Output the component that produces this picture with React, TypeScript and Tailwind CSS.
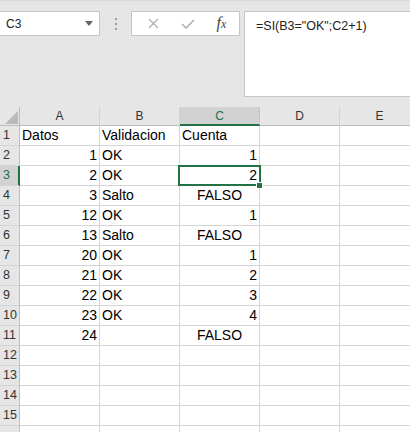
import React from "react";

type Cell = { v: string; align: "l" | "r" | "c" };

const L = (v: string): Cell => ({ v, align: "l" });
const R = (v: string): Cell => ({ v, align: "r" });
const C = (v: string): Cell => ({ v, align: "c" });
const E: Cell = { v: "", align: "l" };

const rows: Cell[][] = [
  [L("Datos"), L("Validacion"), L("Cuenta"), E, E],
  [R("1"), L("OK"), R("1"), E, E],
  [R("2"), L("OK"), R("2"), E, E],
  [R("3"), L("Salto"), C("FALSO"), E, E],
  [R("12"), L("OK"), R("1"), E, E],
  [R("13"), L("Salto"), C("FALSO"), E, E],
  [R("20"), L("OK"), R("1"), E, E],
  [R("21"), L("OK"), R("2"), E, E],
  [R("22"), L("OK"), R("3"), E, E],
  [R("23"), L("OK"), R("4"), E, E],
  [R("24"), E, C("FALSO"), E, E],
  [E, E, E, E, E],
  [E, E, E, E, E],
  [E, E, E, E, E],
  [E, E, E, E, E],
  [E, E, E, E, E],
];

const cols = ["A", "B", "C", "D", "E"];

export default function App() {
  return (
    <div
      className="w-[410px] h-[432px] overflow-hidden bg-white"
      style={{ fontFamily: '"Liberation Sans", Arial, sans-serif' }}
    >
      {/* Formula bar area */}
      <div className="h-[107px] bg-[#e6e6e6] border-t border-[#d9d9d9] pt-[10px] flex items-start">
        <div className="w-[100px] h-[25px] bg-white border border-l-0 border-[#c6c6c6] flex items-center pl-[6px] pr-[6px] text-[12px] text-[#222]">
          <span className="flex-1">C3</span>
          <svg width="8" height="5" viewBox="0 0 8 5">
            <path d="M0 0 L8 0 L4 5 Z" fill="#666" />
          </svg>
        </div>
        <div className="w-[31px] h-[25px] flex flex-col items-center justify-center gap-[3px]">
          <div className="w-[2px] h-[2px] bg-[#9a9a9a]" />
          <div className="w-[2px] h-[2px] bg-[#9a9a9a]" />
          <div className="w-[2px] h-[2px] bg-[#9a9a9a]" />
        </div>
        <div className="w-[109px] h-[25px] bg-white border border-[#c6c6c6] flex items-center">
          <div className="w-[38px] flex justify-center pl-[4px]">
            <svg width="11" height="11" viewBox="0 0 11 11">
              <path d="M1 1 L10 10 M10 1 L1 10" stroke="#b0b0b0" strokeWidth="1.3" />
            </svg>
          </div>
          <div className="w-[36px] flex justify-center">
            <svg width="14" height="10" viewBox="0 0 14 10">
              <path d="M1 5 L5 9 L13 1" stroke="#b0b0b0" strokeWidth="1.6" fill="none" />
            </svg>
          </div>
          <div
            className="flex-1 flex justify-center text-[16px] leading-[16px] italic text-[#444] pr-[2px]"
            style={{ fontFamily: '"Liberation Serif", "Times New Roman", serif' }}
          >
            <span>
              f<span className="text-[12px]">x</span>
            </span>
          </div>
        </div>
        <div className="ml-[4px] flex-1 h-[86px] bg-white border border-r-0 border-[#c6c6c6] pl-[11px] pt-[5px] text-[12.5px] text-[#222]">
          =SI(B3="OK";C2+1)
        </div>
      </div>

      {/* Grid */}
      <div className="relative w-[410px] overflow-hidden">
        <div className="grid grid-cols-[20px_80px_80px_80px_80px_80px] w-[420px]">
          {/* Header row */}
          <div className="h-[19px] bg-[#e6e6e6] border-r border-b border-[#bdbdbd] relative overflow-hidden">
            <svg width="20" height="19" viewBox="0 0 20 19" className="absolute left-0 top-0">
              <path d="M18 4 L18 17 L5 17 Z" fill="#b9b9b9" />
            </svg>
          </div>
          {cols.map((c) => {
            const sel = c === "C";
            return (
              <div
                key={c}
                className={
                  sel
                    ? "h-[19px] bg-[#d2d2d2] border-r border-[#c6c6c6] border-b-2 border-b-[#217346] flex items-center justify-center text-[12px] text-[#217346]"
                    : "h-[19px] bg-[#e6e6e6] border-r border-b border-[#d4d4d4] border-b-[#bdbdbd] flex items-center justify-center text-[12px] text-[#333]"
                }
              >
                {c}
              </div>
            );
          })}
          {rows.map((r, i) => {
            const n = i + 1;
            const sel = n === 3;
            return (
              <React.Fragment key={n}>
                <div
                  className={
                    sel
                      ? "h-[20px] bg-[#d2d2d2] border-r-2 border-r-[#217346] border-b border-b-[#d4d4d4] flex items-center pl-[3px] text-[12.5px] text-[#217346]"
                      : "h-[20px] bg-[#e6e6e6] border-r border-r-[#bdbdbd] border-b border-b-[#d4d4d4] flex items-center pl-[3px] text-[12.5px] text-[#333]"
                  }
                >
                  {n <= 15 ? n : ""}
                </div>
                {r.map((cell, j) => (
                  <div
                    key={j}
                    className={
                      "h-[20px] border-r border-b border-[#d4d4d4] flex items-end pb-[2px] px-[2px] text-[14px] leading-[16px] text-black whitespace-nowrap " +
                      (cell.align === "r"
                        ? "justify-end"
                        : cell.align === "c"
                        ? "justify-center"
                        : "justify-start")
                    }
                  >
                    {cell.v}
                  </div>
                ))}
              </React.Fragment>
            );
          })}
        </div>
        {/* Selection overlay */}
        <div className="absolute left-[178px] top-[58px] w-[83px] h-[21px] border-2 border-[#217346] pointer-events-none" />
        <div className="absolute left-[256px] top-[75px] w-[7px] h-[7px] bg-[#217346] border border-white" />
      </div>
    </div>
  );
}
